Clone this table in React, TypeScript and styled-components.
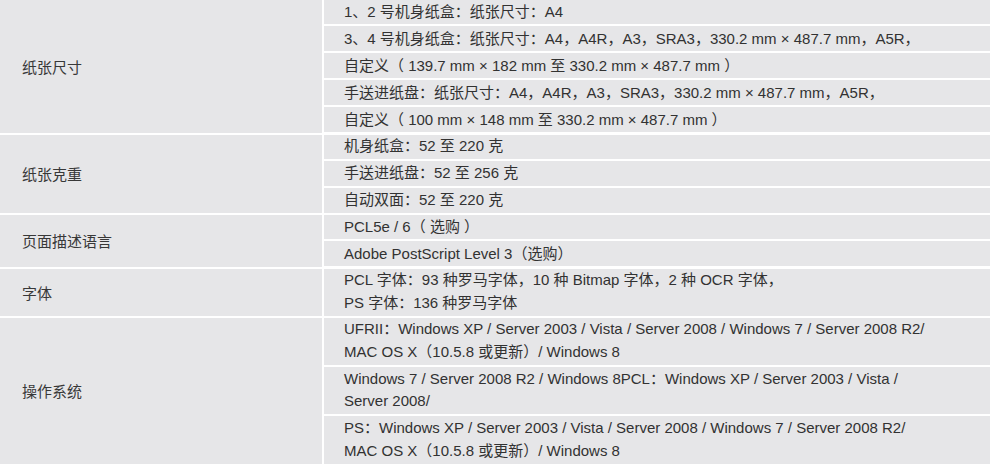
import React from "react";
import styled, { createGlobalStyle } from "styled-components";

const GlobalStyle = createGlobalStyle`
  html, body {
    margin: 0;
    padding: 0;
    background: #ffffff;
  }
  body {
    font-family: "Liberation Sans", "Noto Sans CJK SC", Arial, sans-serif;
    color: #333333;
  }
`;

const SpecTable = styled.div`
  display: grid;
  grid-template-columns: 322px 1fr;
  column-gap: 2px;
  row-gap: 2px;
  width: 990px;
  height: 464px;
  overflow: hidden;
  background: #ffffff;
`;

const Label = styled.div`
  display: flex;
  align-items: center;
  padding-left: 22px;
  background: #e6e6e8;
  font-size: 15px;
  color: #383838;
`;

const Values = styled.div`
  display: flex;
  flex-direction: column;
  gap: 2px;
`;

const Cell = styled.div`
  background: #e6e6e8;
  padding: 1.25px 0 1.25px 20px;
  font-size: 15px;
  line-height: 22.5px;
  color: #323232;
  white-space: nowrap;

  &:first-child {
    padding-top: 0.5px;
  }
`;

const specs: { label: string; values: string[][] }[] = [
  {
    label: "纸张尺寸",
    values: [
      ["1、2 号机身纸盒：纸张尺寸：A4"],
      ["3、4 号机身纸盒：纸张尺寸：A4，A4R，A3，SRA3，330.2 mm × 487.7 mm，A5R，"],
      ["自定义（ 139.7 mm × 182 mm 至 330.2 mm × 487.7 mm ）"],
      ["手送进纸盘：纸张尺寸：A4，A4R，A3，SRA3，330.2 mm × 487.7 mm，A5R，"],
      ["自定义（ 100 mm × 148 mm 至 330.2 mm × 487.7 mm ）"],
    ],
  },
  {
    label: "纸张克重",
    values: [
      ["机身纸盒：52 至 220 克"],
      ["手送进纸盘：52 至 256 克"],
      ["自动双面：52 至 220 克"],
    ],
  },
  {
    label: "页面描述语言",
    values: [["PCL5e / 6（ 选购 ）"], ["Adobe PostScript Level 3（选购）"]],
  },
  {
    label: "字体",
    values: [
      [
        "PCL 字体：93 种罗马字体，10 种 Bitmap 字体，2 种 OCR 字体，",
        "PS 字体：136 种罗马字体",
      ],
    ],
  },
  {
    label: "操作系统",
    values: [
      [
        "UFRII：Windows XP / Server 2003 / Vista / Server 2008 / Windows 7 / Server 2008 R2/",
        "MAC OS X（10.5.8 或更新）/ Windows 8",
      ],
      [
        "Windows 7 / Server 2008 R2 / Windows 8PCL：Windows XP / Server 2003 / Vista /",
        "Server 2008/",
      ],
      [
        "PS：Windows XP / Server 2003 / Vista / Server 2008 / Windows 7 / Server 2008 R2/",
        "MAC OS X（10.5.8 或更新）/ Windows 8",
      ],
    ],
  },
];

export default function App() {
  return (
    <>
      <GlobalStyle />
      <SpecTable>
        {specs.map((spec) => (
          <React.Fragment key={spec.label}>
            <Label>{spec.label}</Label>
            <Values>
              {spec.values.map((lines, i) => (
                <Cell key={i}>
                  {lines.map((line, j) => (
                    <div key={j}>{line}</div>
                  ))}
                </Cell>
              ))}
            </Values>
          </React.Fragment>
        ))}
      </SpecTable>
    </>
  );
}
